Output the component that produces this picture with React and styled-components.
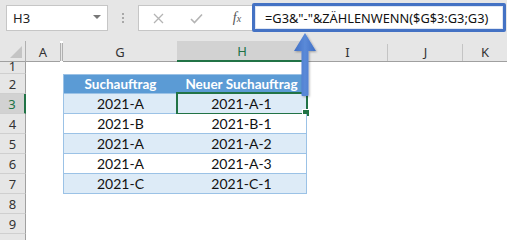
import React from 'react';
import styled, { createGlobalStyle } from 'styled-components';

const GlobalStyle = createGlobalStyle`
  html, body { margin: 0; padding: 0; background: #fff; }
  body { font-family: "Noto Sans", "Open Sans", sans-serif; }
`;

const COLS = '26px 34px 3px 114px 130px 81px 75px 44px';

const Page = styled.div`
  position: relative;
  width: 507px;
  height: 240px;
  overflow: hidden;
  background: #fff;
`;

const Toolbar = styled.div`
  height: 41px;
  background: #e6e6e6;
  display: flex;
  align-items: flex-start;
  box-sizing: border-box;
  padding: 5px 0 0 6px;
`;

const NameBox = styled.div`
  width: 102px;
  height: 26px;
  box-sizing: border-box;
  background: #fff;
  border: 1px solid #c6c6c6;
  display: flex;
  align-items: center;
  justify-content: space-between;
  padding: 0 6px 0 6px;
  font-size: 13px;
  color: #222;
`;

const DropTri = styled.span`
  width: 0;
  height: 0;
  border-left: 4px solid transparent;
  border-right: 4px solid transparent;
  border-top: 4px solid #777;
  margin-top: -2px;
`;

const Grip = styled.div`
  width: 30px;
  height: 26px;
  display: flex;
  flex-direction: column;
  align-items: center;
  justify-content: center;
  gap: 2px;
`;

const GripDot = styled.span`
  width: 2px;
  height: 2px;
  background: #a8a8a8;
`;

const FxBox = styled.div`
  width: 114px;
  height: 26px;
  box-sizing: border-box;
  background: #fff;
  border: 1px solid #c6c6c6;
  border-right: none;
  display: grid;
  grid-template-columns: 38px 38px 38px;
  align-items: center;
  justify-items: center;
`;

const Fx = styled.span`
  font-family: "Liberation Serif", "DejaVu Serif", serif;
  font-style: italic;
  font-size: 14px;
  color: #555;
  padding-left: 6px;
  & > sub {
    font-size: 10px;
    vertical-align: baseline;
  }
`;

const FormulaBox = styled.div`
  margin-top: -2px;
  width: 254px;
  height: 29px;
  box-sizing: border-box;
  background: #fff;
  border: 3px solid #4472c4;
  border-radius: 2px;
  display: flex;
  align-items: center;
  padding-left: 10px;
  font-size: 12.8px;
  color: #111;
  white-space: nowrap;
  box-shadow: inset 0 0 0 1px #dfe6f3;
`;

const Row = styled.div`
  display: grid;
  grid-template-columns: ${COLS};
  height: ${p => p.$h}px;
`;

const ColHead = styled.div`
  position: relative;
  background: ${p => (p.$sel ? '#d2d2d2' : '#e6e6e6')};
  border-bottom: ${p => (p.$sel ? '2px solid #217346' : '1px solid #a0a0a0')};
  box-sizing: border-box;
  display: flex;
  align-items: center;
  justify-content: center;
  font-size: 13px;
  color: ${p => (p.$sel ? '#217346' : '#333')};
  padding-top: 1px;
  &::after {
    content: '';
    display: ${p => (p.$sep ? 'block' : 'none')};
    position: absolute;
    right: 0;
    top: 3px;
    bottom: 0;
    width: 1px;
    background: #c4c4c4;
  }
`;

const Corner = styled.div`
  position: relative;
  background: #e6e6e6;
  border-right: 1px solid #b0b0b0;
  border-bottom: 1px solid #a0a0a0;
  box-sizing: border-box;
  &::after {
    content: '';
    position: absolute;
    right: 3px;
    bottom: 3px;
    width: 0;
    height: 0;
    border-left: 12px solid transparent;
    border-bottom: 12px solid #c4c4c4;
  }
`;

const HiddenCols = styled.div`
  background: #e6e6e6;
  border-left: 1px solid #b0b0b0;
  border-right: 1px solid #b0b0b0;
  border-bottom: 1px solid #a0a0a0;
  box-sizing: border-box;
  margin-top: 2px;
`;

const RowHead = styled.div`
  background: ${p => (p.$sel ? '#d2d2d2' : '#e6e6e6')};
  border-right: ${p => (p.$sel ? '2px solid #217346' : '1px solid #a0a0a0')};
  border-bottom: 1px solid #cfcfcf;
  box-sizing: border-box;
  display: flex;
  align-items: ${p => (p.$top ? 'flex-start' : 'center')};
  justify-content: center;
  font-size: 13px;
  line-height: ${p => (p.$top ? '11px' : 'normal')};
  color: ${p => (p.$sel ? '#217346' : '#333')};
`;

const Cell = styled.div`
  background: #fff;
`;

const TableCell = styled.div`
  position: relative;
  box-sizing: border-box;
  background: ${p =>
    p.$kind === 'head' ? '#5b9bd5' : p.$kind === 'band' ? '#ddebf7' : '#fff'};
  color: ${p => (p.$kind === 'head' ? '#fff' : '#111')};
  font-weight: ${p => (p.$kind === 'head' ? 700 : 400)};
  font-family: "Lato", "Open Sans", sans-serif;
  font-size: ${p => (p.$kind === 'head' ? '13.5px' : '14px')};
  display: flex;
  align-items: center;
  justify-content: center;
  border-bottom: 1px solid #9bc2e6;
  border-top: ${p => (p.$kind === 'head' ? '1px solid #9bc2e6' : 'none')};
  border-left: ${p => (p.$first ? '1px solid #9bc2e6' : 'none')};
  border-right: ${p => (p.$last ? '1px solid #9bc2e6' : 'none')};
`;

const Selection = styled.div`
  position: absolute;
  left: -1px;
  top: -2px;
  right: -2px;
  bottom: -2px;
  border: 2px solid #217346;
  pointer-events: none;
  &::after {
    content: '';
    position: absolute;
    right: -4px;
    bottom: -4px;
    width: 6px;
    height: 6px;
    background: #217346;
    border: 1px solid #fff;
  }
`;

const Arrow = styled.svg`
  position: absolute;
  left: 290px;
  top: 31px;
  width: 32px;
  height: 68px;
  overflow: visible;
`;

const tableRows = [
  ['Suchauftrag', 'Neuer Suchauftrag', 'head'],
  ['2021-A', '2021-A-1', 'band'],
  ['2021-B', '2021-B-1', 'plain'],
  ['2021-A', '2021-A-2', 'band'],
  ['2021-A', '2021-A-3', 'plain'],
  ['2021-C', '2021-C-1', 'band'],
];

export default function App() {
  return (
    <Page>
      <GlobalStyle />
      <Toolbar>
        <NameBox>
          <span>H3</span>
          <DropTri />
        </NameBox>
        <Grip>
          <GripDot />
          <GripDot />
          <GripDot />
        </Grip>
        <FxBox>
          <svg width="11" height="11" viewBox="0 0 11 11">
            <path d="M1 1 L10 10 M10 1 L1 10" stroke="#b4b4b4" strokeWidth="1.3" fill="none" />
          </svg>
          <svg width="13" height="11" viewBox="0 0 13 11">
            <path d="M1 6 L4.5 9.5 L12 1.5" stroke="#b4b4b4" strokeWidth="1.6" fill="none" />
          </svg>
          <Fx>
            f<sub>x</sub>
          </Fx>
        </FxBox>
        <FormulaBox>=G3&amp;"-"&amp;ZÄHLENWENN($G$3:G3;G3)</FormulaBox>
      </Toolbar>

      <Row $h={20}>
        <Corner />
        <ColHead>A</ColHead>
        <HiddenCols />
        <ColHead>G</ColHead>
        <ColHead $sel>H</ColHead>
        <ColHead $sep>I</ColHead>
        <ColHead $sep>J</ColHead>
        <ColHead>K</ColHead>
      </Row>

      <Row $h={13}>
        <RowHead $top>1</RowHead>
        <Cell />
        <Cell />
        <Cell />
        <Cell />
        <Cell />
        <Cell />
        <Cell />
      </Row>

      {tableRows.map(([g, h, kind], i) => (
        <Row $h={20} key={i}>
          <RowHead $sel={i === 1}>{i + 2}</RowHead>
          <Cell />
          <Cell />
          <TableCell $kind={kind} $first>
            {g}
          </TableCell>
          <TableCell $kind={kind} $last>
            {h}
            {i === 1 && <Selection />}
          </TableCell>
          <Cell />
          <Cell />
          <Cell />
        </Row>
      ))}

      {[8, 9, null].map((n, i) => (
        <Row $h={20} key={i}>
          <RowHead>{n}</RowHead>
          <Cell />
          <Cell />
          <Cell />
          <Cell />
          <Cell />
          <Cell />
          <Cell />
        </Row>
      ))}

      <Arrow viewBox="0 0 32 68">
        <defs>
          <linearGradient id="shaft" x1="0" x2="1" y1="0" y2="0">
            <stop offset="0" stopColor="#3f6fc6" />
            <stop offset="0.5" stopColor="#5b8ad8" />
            <stop offset="1" stopColor="#3f6fc6" />
          </linearGradient>
          <filter id="sh" x="-50%" y="-20%" width="200%" height="140%">
            <feDropShadow dx="1" dy="1" stdDeviation="1" floodColor="#000" floodOpacity="0.3" />
          </filter>
        </defs>
        <path
          d="M15 2 L26 20 L18.5 20 L18.5 64 Q18.5 65 17.5 65 L12.5 65 Q11.5 65 11.5 64 L11.5 20 L4 20 Z"
          fill="url(#shaft)"
          filter="url(#sh)"
        />
      </Arrow>
    </Page>
  );
}
